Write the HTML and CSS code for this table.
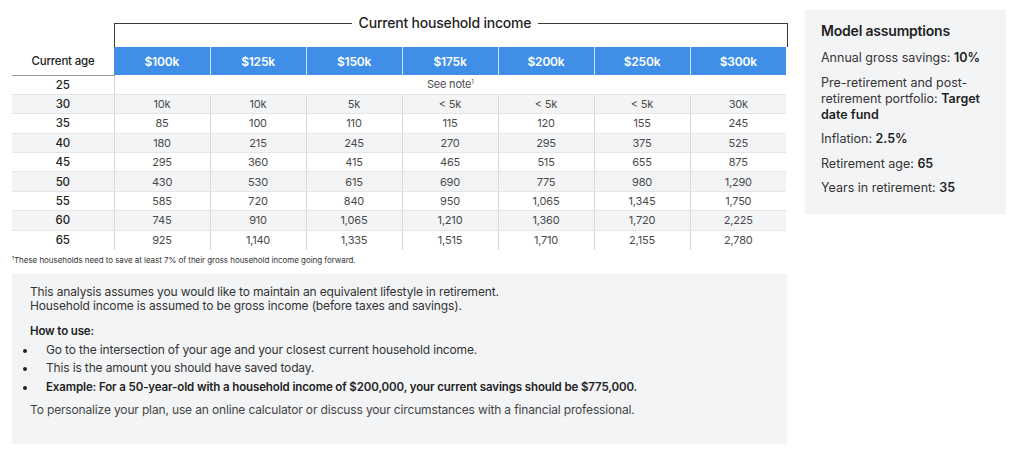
FILE: index.html
```html
<!DOCTYPE html>
<html lang="en">
<head>
<meta charset="utf-8">
<title>Retirement savings</title>
<link rel="stylesheet" href="styles.css">
</head>
<body>
<div class="page">
  <div class="main">
    <div class="bracket"><span class="bracket-title">Current household income</span></div>
    <table class="grid">
      <colgroup>
        <col class="c-age"><col class="c-inc"><col class="c-inc"><col class="c-inc"><col class="c-inc"><col class="c-inc"><col class="c-inc"><col class="c-inc">
      </colgroup>
      <thead>
        <tr>
          <th class="age-head">Current age</th>
          <th class="inc">$100k</th><th class="inc">$125k</th><th class="inc">$150k</th><th class="inc">$175k</th><th class="inc">$200k</th><th class="inc">$250k</th><th class="inc">$300k</th>
        </tr>
      </thead>
      <tbody>
        <tr><td class="age">25</td><td class="note" colspan="7">See note<sup>1</sup></td></tr>
        <tr class="alt"><td class="age">30</td><td>10k</td><td>10k</td><td>5k</td><td>&lt; 5k</td><td>&lt; 5k</td><td>&lt; 5k</td><td>30k</td></tr>
        <tr><td class="age">35</td><td>85</td><td>100</td><td>110</td><td>115</td><td>120</td><td>155</td><td>245</td></tr>
        <tr class="alt"><td class="age">40</td><td>180</td><td>215</td><td>245</td><td>270</td><td>295</td><td>375</td><td>525</td></tr>
        <tr><td class="age">45</td><td>295</td><td>360</td><td>415</td><td>465</td><td>515</td><td>655</td><td>875</td></tr>
        <tr class="alt"><td class="age">50</td><td>430</td><td>530</td><td>615</td><td>690</td><td>775</td><td>980</td><td>1,290</td></tr>
        <tr><td class="age">55</td><td>585</td><td>720</td><td>840</td><td>950</td><td>1,065</td><td>1,345</td><td>1,750</td></tr>
        <tr class="alt"><td class="age">60</td><td>745</td><td>910</td><td>1,065</td><td>1,210</td><td>1,360</td><td>1,720</td><td>2,225</td></tr>
        <tr><td class="age">65</td><td>925</td><td>1,140</td><td>1,335</td><td>1,515</td><td>1,710</td><td>2,155</td><td>2,780</td></tr>
      </tbody>
    </table>
    <p class="footnote"><sup>1</sup>These households need to save at least 7% of their gross household income going forward.</p>
    <div class="info">
      <p class="intro">This analysis assumes you would like to maintain an equivalent lifestyle in retirement.<br>Household income is assumed to be gross income (before taxes and savings).</p>
      <p class="howto">How to use:</p>
      <ul class="steps">
        <li>Go to the intersection of your age and your closest current household income.</li>
        <li>This is the amount you should have saved today.</li>
        <li class="strong">Example: For a 50-year-old with a household income of $200,000, your current savings should be $775,000.</li>
      </ul>
      <p class="closing">To personalize your plan, use an online calculator or discuss your circumstances with a financial professional.</p>
    </div>
  </div>
  <aside class="assumptions">
    <h2 class="as-title">Model assumptions</h2>
    <p class="as-item">Annual gross savings: <b>10%</b></p>
    <p class="as-item">Pre-retirement and post-retirement portfolio: <b>Target</b> <b>date fund</b></p>
    <p class="as-item">Inflation: <b>2.5%</b></p>
    <p class="as-item">Retirement age: <b>65</b></p>
    <p class="as-item">Years in retirement: <b>35</b></p>
  </aside>
</div>
</body>
</html>
```

FILE: styles.css
```css
* { box-sizing: border-box; }
html, body { margin: 0; padding: 0; background: #fff; }
body {
  font-family: Inter, "Liberation Sans", Arial, sans-serif;
  color: #2b2b2b;
  letter-spacing: -0.2px;
}
.page {
  display: flex;
  align-items: flex-start;
  gap: 18px;
  padding-left: 12px;
}
.main { width: 775px; }

.bracket {
  margin: 23px 0 0 102px;
  width: 674px;
  height: 24px;
  border: 1.5px solid #3a3a3a;
  border-bottom: none;
  display: flex;
  justify-content: center;
  padding-right: 12px;
}
.bracket-title {
  margin-top: -10px;
  height: 18px;
  padding: 0 7px;
  background: #fff;
  font-size: 14px;
  font-weight: 500;
  line-height: 18px;
  color: #1f1f1f;
}

.grid {
  border-collapse: collapse;
  table-layout: fixed;
  width: 774px;
}
.c-age { width: 102px; }
.c-inc { width: 96px; }
.grid th, .grid td {
  padding: 0;
  text-align: center;
}
.age-head {
  height: 28px;
  font-size: 11.5px;
  font-weight: 500;
  color: #222;
  border-bottom: 1px solid #9a9a9a;
}
.inc {
  background: #3f8fe9;
  color: #fff;
  font-size: 12px;
  font-weight: 600;
  border-left: 1px solid #cfe2f8;
}
.inc:nth-child(2) { border-left: none; }
.grid tbody td {
  height: 19.4px;
  font-size: 11px;
  color: #4a4a4a;
  border-left: 1px solid #d9d9d9;
  border-bottom: 1px solid #e6e6e6;
}
.grid tbody td.age {
  border-left: none;
  font-size: 11.5px;
  font-weight: 500;
  color: #222;
}
.grid tbody tr:last-child td { border-bottom: none; }
.grid tbody tr.alt td { background: #f3f4f6; }
.note sup { font-size: 6px; vertical-align: 4px; }

.footnote {
  margin: 3px 0 0;
  font-size: 8px;
  line-height: 10px;
  letter-spacing: -0.05px;
  color: #333;
}
.footnote sup { font-size: 5px; vertical-align: 3px; }

.info {
  margin-top: 9px;
  height: 170px;
  background: #f3f4f6;
  padding: 11px 18px 0;
  font-size: 12px;
  letter-spacing: -0.15px;
  color: #333;
}
.info p { margin: 0; }
.intro { line-height: 14.5px; }
.howto { margin-top: 9px !important; font-weight: 600; font-size: 11.5px; line-height: 16px; color: #222; }
.steps {
  margin: 2px 0 0;
  padding: 0;
  list-style: none;
}
.steps li {
  position: relative;
  padding-left: 16px;
  line-height: 18.5px;
}
.steps li::before {
  content: "";
  position: absolute;
  left: -7px;
  top: 8px;
  width: 4px;
  height: 4px;
  border-radius: 50%;
  background: #222;
}
.steps li.strong { font-weight: 600; font-size: 11.5px; letter-spacing: -0.12px; color: #222; }
.closing { margin-top: 7px !important; line-height: 14px; color: #444; }

.assumptions {
  margin-top: 10px;
  width: 201px;
  height: 204px;
  background: #f3f4f6;
  padding: 12px 16px 0;
}
.as-title {
  margin: 0 0 10px;
  font-size: 14px;
  font-weight: 600;
  line-height: 18px;
  color: #1f1f1f;
}
.as-item {
  margin: 0 0 8.5px;
  font-size: 12.5px;
  letter-spacing: 0;
  line-height: 16px;
  color: #333;
}
.as-item b { font-weight: 600; color: #1f1f1f; }
```
